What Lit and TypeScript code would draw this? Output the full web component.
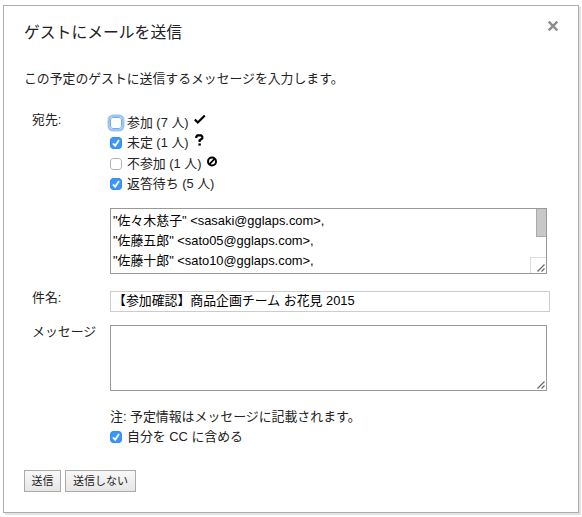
import { LitElement, html, css, svg } from "lit";
import { customElement, property } from "lit/decorators.js";

const CHECK = svg`<path d="M0.8 5.5L3.8 8.5L10.8 1.5" fill="none" stroke="#000" stroke-width="2.2"/>`;
const QUESTION = svg`<path d="M2.3 4V2.6L3.4 1.4H7.2L8.3 2.6V4.4L5.6 6.3V8" fill="none" stroke="#000" stroke-width="2.2"/><path d="M4.4 9.4h2.4v2.2h-2.4z"/>`;
const BANNED = svg`<circle cx="6" cy="6.5" r="4" fill="none" stroke="#000" stroke-width="2"/><path d="M3.2 9.3L8.8 3.7" stroke="#000" stroke-width="1.8"/>`;

@customElement("check-box")
class CheckBox extends LitElement {
  @property({ type: Boolean }) checked = false;
  @property({ type: Boolean }) focused = false;
  static styles = css`
    :host { display: block; width: 12px; height: 12px; flex: none; }
    .box { display: block; width: 12px; height: 12px; border-radius: 3px; }
    .focus { box-shadow: 0 0 0 2.5px #98c6f8; }
    .frame { fill: #fff; stroke: #b2b2b2; }
    .on .frame { fill: #3b96f8; stroke: #338df2; }
    .focus .frame { stroke: #7ea9da; }
    .tick { fill: none; stroke: #fff; stroke-width: 1.8; }
  `;
  render() {
    return html`<svg class="box ${this.checked ? "on" : ""} ${this.focused ? "focus" : ""}" viewBox="0 0 12 12">
      <rect class="frame" x="0.5" y="0.5" width="11" height="11" rx="2.5"/>
      ${this.checked ? svg`<path class="tick" d="M3 6.3L5.2 8.8L9 3"/>` : ""}
    </svg>`;
  }
}

@customElement("app-root")
class AppRoot extends LitElement {
  static styles = css`
    :host { display: block; height: 517px; overflow: hidden; background: #fff; color: #222;
      font: 12.9px/20px "Liberation Sans", "Noto Sans CJK JP", sans-serif; }
    .page { box-sizing: border-box; height: 517px; padding: 5px 0 0 3px; }
    .dialog { box-sizing: border-box; width: 576px; height: 508px; border: 1px solid #acacac;
      box-shadow: 2px 2px 1px #e4e4e4; background: #fff; padding: 15px 20px 0; }
    .head { display: flex; justify-content: space-between; height: 24px; }
    h1 { margin: 0; font-size: 15.8px; line-height: 24px; font-weight: 400; }
    .close { width: 12px; height: 12px; margin: -1px -1px 0 0; }
    .intro { margin: 24px 0 0; height: 20px; font-size: 12.85px; }
    .row { display: flex; margin-left: 8px; }
    .label { width: 78px; flex: none; white-space: nowrap; }
    .field { flex: none; }
    .to { margin-top: 23px; }
    .to .label { line-height: 22px; margin-top: -3px; }
    .guests { padding-top: 0.5px; }
    .guest { display: flex; align-items: center; height: 20.5px; white-space: pre; }
    .guest check-box { margin-right: 5px; }
    .guest > svg { width: 12px; height: 12px; margin: -6px 0 0 5px; }
    .area { position: relative; box-sizing: border-box; width: 437px; height: 66px; border: 1px solid #999;
      background: #fff; color: #000; padding: 2px; overflow: hidden; white-space: pre; }
    .list { margin-top: 13.5px; }
    .thumb { position: absolute; top: 0; right: 0; width: 10px; height: 28px; box-sizing: border-box; background: #c8c8c8; border: solid #aaa; border-width: 0 0 1px 1px; }
    .grip { position: absolute; right: 0; bottom: 0; width: 16px; height: 16px; box-sizing: border-box; }
    .corner { border: solid #ddd; border-width: 1px 0 0 1px; }
    .grip svg { position: absolute; right: 1px; bottom: 1px; width: 8px; height: 8px; }
    .subject { margin-top: 17px; }
    .subject .label { line-height: 14px; }
    .input { box-sizing: border-box; width: 440px; height: 21px; border: 1px solid #ccc; padding: 0 2px; line-height: 18px; color: #000; white-space: pre; }
    .message { margin-top: 13px; }
    .message .label { line-height: 14px; }
    .note { margin-top: 16px; }
    .buttons { display: flex; gap: 4px; margin-top: 22px; }
    button { box-sizing: border-box; height: 22px; margin: 0; padding: 0; border: 1px solid #aaa; border-radius: 0;
      background: linear-gradient(#f8f8f8, #e6e6e6); color: #222; font: 11px/20px "Liberation Sans", "Noto Sans CJK JP", sans-serif; }
    .send { width: 37px; }
    .skip { width: 71px; }
  `;

  private guest(label: string, checked: boolean, icon: unknown = "", focused = false) {
    return html`<div class="guest"><check-box ?checked=${checked} ?focused=${focused}></check-box><span>${label}</span>${icon ? html`<svg viewBox="0 0 12 12">${icon}</svg>` : ""}</div>`;
  }

  private grip(corner: boolean) {
    return html`<div class="grip ${corner ? "corner" : ""}"><svg viewBox="0 0 8 8"><path d="M0.5 7.5L7.5 0.5M4.5 7.5L7.5 4.5" stroke="#666" stroke-width="1.2" fill="none"/></svg></div>`;
  }

  render() {
    return html`<div class="page"><div class="dialog">
      <div class="head"><h1>ゲストにメールを送信</h1>
        <svg class="close" viewBox="0 0 12 12"><path d="M1.7 1.7L10.3 10.3M10.3 1.7L1.7 10.3" stroke="#8c8c8c" stroke-width="2.4"/></svg></div>
      <p class="intro">この予定のゲストに送信するメッセージを入力します。</p>
      <div class="row to"><div class="label">宛先:</div><div class="field">
        <div class="guests">
          ${this.guest("参加 (7 人)", false, CHECK, true)}
          ${this.guest("未定 (1 人)", true, QUESTION)}
          ${this.guest("不参加 (1 人)", false, BANNED)}
          ${this.guest("返答待ち (5 人)", true)}
        </div>
        <div class="area list"><div>"佐々木慈子" &lt;sasaki@gglaps.com&gt;,</div><div>"佐藤五郎" &lt;sato05@gglaps.com&gt;,</div><div>"佐藤十郎" &lt;sato10@gglaps.com&gt;,</div><div class="thumb"></div>${this.grip(true)}</div>
      </div></div>
      <div class="row subject"><div class="label">件名:</div><div class="input">【参加確認】商品企画チーム お花見 2015</div></div>
      <div class="row message"><div class="label">メッセージ</div><div class="field">
        <div class="area">${this.grip(false)}</div>
        <div class="note">注: 予定情報はメッセージに記載されます。</div>
        ${this.guest("自分を CC に含める", true)}
      </div></div>
      <div class="buttons"><button class="send">送信</button><button class="skip">送信しない</button></div>
    </div></div>`;
  }
}
